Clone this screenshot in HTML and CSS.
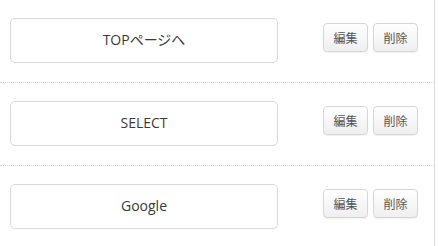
FILE: index.html
```html
<!DOCTYPE html>
<html lang="ja">
<head>
<meta charset="utf-8">
<link rel="stylesheet" href="styles.css">
</head>
<body>
<div class="list">
  <div class="row">
    <div class="link">TOPページへ</div>
    <div class="actions">
      <button class="btn">編集</button>
      <button class="btn">削除</button>
    </div>
  </div>
  <div class="row">
    <div class="link">SELECT</div>
    <div class="actions">
      <button class="btn">編集</button>
      <button class="btn">削除</button>
    </div>
  </div>
  <div class="row">
    <div class="link">Google</div>
    <div class="actions">
      <button class="btn">編集</button>
      <button class="btn">削除</button>
    </div>
  </div>
</div>
</body>
</html>
```
FILE: styles.css
```css
html, body {
  margin: 0;
  padding: 0;
  background: #fff;
}
body {
  font-family: "Open Sans", "Noto Sans CJK JP", sans-serif;
  color: #333;
}
.list {
  width: 434px;
  height: 246px;
  border-right: 1px solid #dcdcdc;
}
.row {
  display: flex;
  align-items: flex-start;
  padding: 18px 0 19px 10px;
  border-bottom: 1px dotted #d6d6d6;
}
.link {
  width: 266px;
  box-sizing: content-box;
  height: 40px;
  padding-bottom: 3px;
  border: 1px solid #d9d9d9;
  border-radius: 5px;
  display: flex;
  align-items: center;
  justify-content: center;
  font-size: 14px;
  color: #3a3a3a;
}
.actions {
  display: flex;
  gap: 5px;
  margin-left: 45px;
  margin-top: 5px;
}
.btn {
  width: 45px;
  height: 29px;
  padding: 0 0 1px;
  border: 1px solid #d6d6d6;
  border-radius: 4px;
  background: linear-gradient(#ffffff, #efefef);
  box-shadow: 0 1px 1px rgba(0,0,0,0.06);
  font-family: "Noto Sans CJK JP", sans-serif;
  font-size: 12px;
  color: #555;
}
```
